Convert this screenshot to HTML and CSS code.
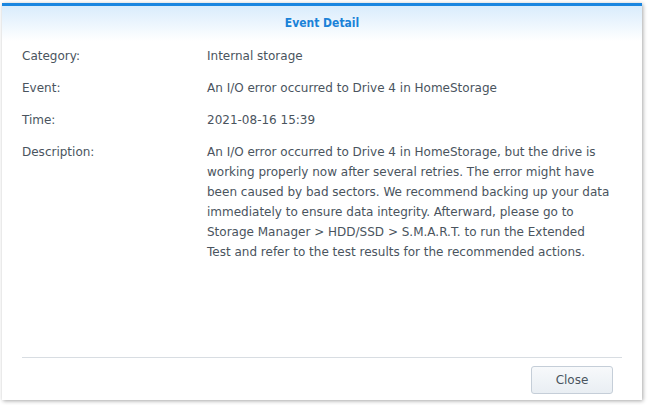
FILE: index.html
```html
<!DOCTYPE html>
<html>
<head>
<meta charset="utf-8">
<link rel="stylesheet" href="styles.css">
</head>
<body>
<div class="dialog">
  <div class="header">Event Detail</div>
  <div class="content">
    <div class="row"><div class="label">Category:</div><div class="value">Internal storage</div></div>
    <div class="row"><div class="label">Event:</div><div class="value">An I/O error occurred to Drive 4 in HomeStorage</div></div>
    <div class="row"><div class="label">Time:</div><div class="value">2021-08-16 15:39</div></div>
    <div class="row"><div class="label">Description:</div><div class="value desc">An I/O error occurred to Drive 4 in HomeStorage, but the drive is working properly now after several retries. The error might have been caused by bad sectors. We recommend backing up your data immediately to ensure data integrity. Afterward, please go to Storage Manager &gt; HDD/SSD &gt; S.M.A.R.T. to run the Extended<br>Test and refer to the test results for the recommended actions.</div></div>
  </div>
  <div class="footer">
    <button class="btn">Close</button>
  </div>
</div>
</body>
</html>
```
FILE: styles.css
```css
html, body { margin: 0; padding: 0; background: #ffffff; }
body { width: 649px; height: 405px; overflow: hidden; font-family: "DejaVu Sans", Verdana, sans-serif; }
.dialog {
  position: relative;
  margin: 3px 0 0 2px;
  width: 640px;
  height: 397px;
  box-sizing: border-box;
  border-top: 3px solid #1a86e0;
  background: #fff;
  box-shadow: 1px 1px 4px rgba(0,0,0,0.35);
  display: flex;
  flex-direction: column;
}
.header {
  height: 35px;
  padding-top: 3px;
  box-sizing: border-box;
  line-height: 29px;
  text-align: center;
  font-family: "DejaVu Sans Condensed", "DejaVu Sans", sans-serif;
  font-weight: bold;
  font-size: 12px;
  color: #1a82d8;
  background: linear-gradient(#d9ecfc, #ffffff);
}
.content { padding: 5px 20px 0 20px; flex: 1; font-size: 12px; color: #4a545e; }
.row { display: flex; line-height: 20px; margin-bottom: 12px; }
.label { width: 185px; flex: none; }
.value { flex: 1; }
.desc { width: 414px; flex: none; }
.footer {
  margin: 0 20px;
  border-top: 1px solid #d8dde2;
  height: 42px;
  display: flex;
  justify-content: flex-end;
  align-items: flex-start;
  padding-right: 9px;
}
.btn {
  width: 82px;
  height: 28px;
  font-family: "DejaVu Sans", Verdana, sans-serif;
  font-size: 12px;
  color: #4a545e;
  border: 1px solid #c5ced8;
  border-radius: 3px;
  background: linear-gradient(#f7f9fb, #e9eef3);
  margin-top: 8px;
}
```
